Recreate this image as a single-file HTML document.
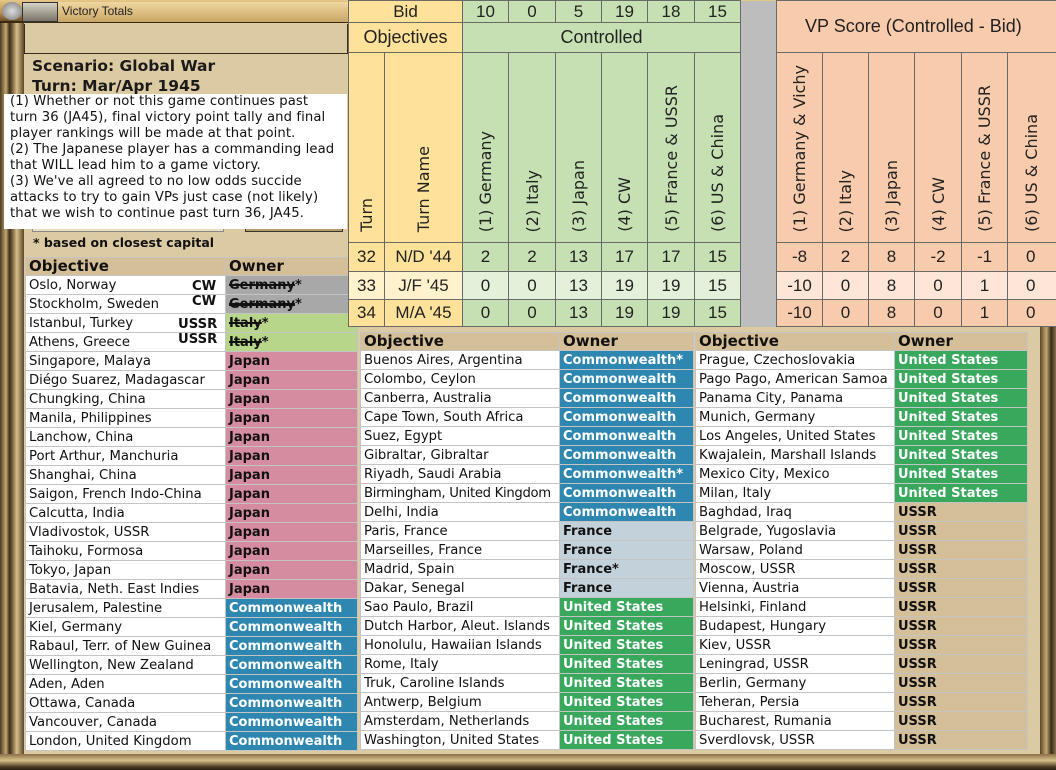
<!DOCTYPE html>
<html><head><meta charset="utf-8"><style>
*{margin:0;padding:0;box-sizing:border-box}
body{width:1056px;height:770px;overflow:hidden;position:relative;background:#dccaa2;font-family:"DejaVu Sans","Liberation Sans",sans-serif}
.abs{position:absolute}
.tb{position:absolute;border-collapse:collapse;table-layout:fixed;font-size:13.2px;background:#fff}
.tb td{height:19px;border:1px solid #c4c4c4;padding:0 0 0 3px;white-space:nowrap;overflow:hidden;line-height:17px;color:#111}
.tb tr.h td{background:#d5bf98;font-weight:bold;font-size:15px;height:18px;color:#111}
.o{font-weight:bold;font-size:13px!important}
.cw{background:#2e87b0;color:#fff!important}
.jp{background:#d68ca0}
.us{background:#37a85c;color:#fff!important}
.fr{background:#c3d2da}
.su{background:#d5bf98}
.gy{background:#a8a8a8}
.it{background:#b8d68a}
.ov{position:absolute;left:348px;top:0;border-collapse:collapse;table-layout:fixed;font-family:"Liberation Sans Narrow","Liberation Sans",sans-serif;font-size:17px;color:#222}
.ov td{border:1px solid #6a6a6a;text-align:center;padding:0;overflow:hidden;white-space:nowrap}
.y{background:#ffe29a}.g{background:#c6e0b4}.r{background:#f8cbad}.gg{background:#bdbdbd;border:none!important}
.g2{background:#e3f0da}.r2{background:#fde5d7}.y2{background:#fff2cc}
.v{writing-mode:vertical-rl;transform:rotate(180deg);font-family:"DejaVu Sans",sans-serif;font-size:16px;white-space:nowrap;display:inline-block;text-align:left;padding-top:5px}
.vc{vertical-align:bottom}
</style></head><body>
<div class="abs" style="left:0;top:0;width:1056px;height:23px;background:linear-gradient(#e6c88a,#b8904c 60%,#6e5028);border-bottom:2px solid #3a2a14"></div>
<div class="abs" style="left:2px;top:2px;width:20px;height:18px;border-radius:50%;background:radial-gradient(#ddd,#777);"></div>
<div class="abs" style="left:22px;top:2px;width:36px;height:20px;background:linear-gradient(#d6d2c6,#7a7468);border:1px solid #333"></div>
<div class="abs" style="left:58px;top:2px;width:290px;height:20px;background:linear-gradient(#f0d7a0,#c9a566);"></div>
<div class="abs" style="left:62px;top:4px;font-size:12px;color:#222;font-family:'Liberation Sans',sans-serif">Victory Totals</div>
<div class="abs" style="left:0;top:23px;width:24px;height:747px;background:linear-gradient(90deg,#4a3a22,#c4a86e 25%,#3a2c18 40%,#8a7048 55%,#d7c08a 70%,#5a4628)"></div>
<div class="abs" style="left:1040px;top:23px;width:16px;height:747px;background:linear-gradient(90deg,#5a4628,#c4a86e 40%,#3a2c18 70%,#8a7048)"></div>
<div class="abs" style="left:0;top:754px;width:1056px;height:16px;background:linear-gradient(#8a7048,#d7c08a 40%,#4a3a22 80%,#2a2010)"></div>
<div class="abs" style="left:24px;top:24px;width:324px;height:30px;border:1px solid #3a2c18;border-top:none"></div>
<div class="abs" style="left:32px;top:56px;font-weight:bold;font-size:15.5px;color:#1a1a1a;line-height:20px">Scenario: Global War<br>Turn: Mar/Apr 1945</div>
<div class="abs" style="left:245px;top:222px;width:98px;height:10px;background:#b89c6a;border:1px solid #333"></div>
<div class="abs" style="left:32px;top:222px;width:192px;height:10px;border:1px solid #888;background:#e8dcc0"></div>
<div class="abs" style="left:4px;top:94px;width:343px;height:135px;background:#fff;padding:0 0 0 6px;font-size:13.2px;line-height:16px;color:#111;white-space:nowrap;overflow:hidden;letter-spacing:0.1px">(1) Whether or not this game continues past<br>turn 36 (JA45), final victory point tally and final<br>player rankings will be made at that point.<br>(2) The Japanese player has a commanding lead<br>that WILL lead him to a game victory.<br>(3) We've all agreed to no low odds succide<br>attacks to try to gain VPs just case (not likely)<br>that we wish to continue past turn 36, JA45.</div>
<div class="abs" style="left:33px;top:235px;font-weight:bold;font-size:12.5px;color:#111">* based on closest capital</div>

<table class="tb" style="left:25px;top:257px;width:332px">
<colgroup><col style="width:200px"><col style="width:132px"></colgroup>
<tr class="h"><td>Objective</td><td>Owner</td></tr>
<tr><td style="position:relative">Oslo, Norway<span style="position:absolute;left:166px;top:2px;font-weight:bold">CW</span></td><td class="o gy"><s style="text-decoration-thickness:2px">Germany</s>*</td></tr>
<tr><td style="position:relative">Stockholm, Sweden<span style="position:absolute;left:166px;top:-2px;font-weight:bold">CW</span></td><td class="o gy"><s style="text-decoration-thickness:3px">Germany</s>*</td></tr>
<tr><td style="position:relative">Istanbul, Turkey<span style="position:absolute;left:152px;top:2px;font-weight:bold">USSR</span></td><td class="o it"><s style="text-decoration-thickness:2px">Italy</s>*</td></tr>
<tr><td style="position:relative">Athens, Greece<span style="position:absolute;left:152px;top:-2px;font-weight:bold">USSR</span></td><td class="o it"><s style="text-decoration-thickness:2px">Italy</s>*</td></tr>
<tr><td>Singapore, Malaya</td><td class="o jp">Japan</td></tr>
<tr><td>Diégo Suarez, Madagascar</td><td class="o jp">Japan</td></tr>
<tr><td>Chungking, China</td><td class="o jp">Japan</td></tr>
<tr><td>Manila, Philippines</td><td class="o jp">Japan</td></tr>
<tr><td>Lanchow, China</td><td class="o jp">Japan</td></tr>
<tr><td>Port Arthur, Manchuria</td><td class="o jp">Japan</td></tr>
<tr><td>Shanghai, China</td><td class="o jp">Japan</td></tr>
<tr><td>Saigon, French Indo-China</td><td class="o jp">Japan</td></tr>
<tr><td>Calcutta, India</td><td class="o jp">Japan</td></tr>
<tr><td>Vladivostok, USSR</td><td class="o jp">Japan</td></tr>
<tr><td>Taihoku, Formosa</td><td class="o jp">Japan</td></tr>
<tr><td>Tokyo, Japan</td><td class="o jp">Japan</td></tr>
<tr><td>Batavia, Neth. East Indies</td><td class="o jp">Japan</td></tr>
<tr><td>Jerusalem, Palestine</td><td class="o cw">Commonwealth</td></tr>
<tr><td>Kiel, Germany</td><td class="o cw">Commonwealth</td></tr>
<tr><td>Rabaul, Terr. of New Guinea</td><td class="o cw">Commonwealth</td></tr>
<tr><td>Wellington, New Zealand</td><td class="o cw">Commonwealth</td></tr>
<tr><td>Aden, Aden</td><td class="o cw">Commonwealth</td></tr>
<tr><td>Ottawa, Canada</td><td class="o cw">Commonwealth</td></tr>
<tr><td>Vancouver, Canada</td><td class="o cw">Commonwealth</td></tr>
<tr><td>London, United Kingdom</td><td class="o cw">Commonwealth</td></tr>
</table>

<table class="tb" style="left:360px;top:332px;width:333px">
<colgroup><col style="width:199px"><col style="width:134px"></colgroup>
<tr class="h"><td>Objective</td><td>Owner</td></tr>
<tr><td>Buenos Aires, Argentina</td><td class="o cw">Commonwealth*</td></tr>
<tr><td>Colombo, Ceylon</td><td class="o cw">Commonwealth</td></tr>
<tr><td>Canberra, Australia</td><td class="o cw">Commonwealth</td></tr>
<tr><td>Cape Town, South Africa</td><td class="o cw">Commonwealth</td></tr>
<tr><td>Suez, Egypt</td><td class="o cw">Commonwealth</td></tr>
<tr><td>Gibraltar, Gibraltar</td><td class="o cw">Commonwealth</td></tr>
<tr><td>Riyadh, Saudi Arabia</td><td class="o cw">Commonwealth*</td></tr>
<tr><td style="letter-spacing:-0.3px">Birmingham, United Kingdom</td><td class="o cw">Commonwealth</td></tr>
<tr><td>Delhi, India</td><td class="o cw">Commonwealth</td></tr>
<tr><td>Paris, France</td><td class="o fr">France</td></tr>
<tr><td>Marseilles, France</td><td class="o fr">France</td></tr>
<tr><td>Madrid, Spain</td><td class="o fr">France*</td></tr>
<tr><td>Dakar, Senegal</td><td class="o fr">France</td></tr>
<tr><td>Sao Paulo, Brazil</td><td class="o us">United States</td></tr>
<tr><td>Dutch Harbor, Aleut. Islands</td><td class="o us">United States</td></tr>
<tr><td>Honolulu, Hawaiian Islands</td><td class="o us">United States</td></tr>
<tr><td>Rome, Italy</td><td class="o us">United States</td></tr>
<tr><td>Truk, Caroline Islands</td><td class="o us">United States</td></tr>
<tr><td>Antwerp, Belgium</td><td class="o us">United States</td></tr>
<tr><td>Amsterdam, Netherlands</td><td class="o us">United States</td></tr>
<tr><td>Washington, United States</td><td class="o us">United States</td></tr>
</table>

<table class="tb" style="left:695px;top:332px;width:332px">
<colgroup><col style="width:199px"><col style="width:133px"></colgroup>
<tr class="h"><td>Objective</td><td>Owner</td></tr>
<tr><td>Prague, Czechoslovakia</td><td class="o us">United States</td></tr>
<tr><td>Pago Pago, American Samoa</td><td class="o us">United States</td></tr>
<tr><td>Panama City, Panama</td><td class="o us">United States</td></tr>
<tr><td>Munich, Germany</td><td class="o us">United States</td></tr>
<tr><td>Los Angeles, United States</td><td class="o us">United States</td></tr>
<tr><td>Kwajalein, Marshall Islands</td><td class="o us">United States</td></tr>
<tr><td>Mexico City, Mexico</td><td class="o us">United States</td></tr>
<tr><td>Milan, Italy</td><td class="o us">United States</td></tr>
<tr><td>Baghdad, Iraq</td><td class="o su">USSR</td></tr>
<tr><td>Belgrade, Yugoslavia</td><td class="o su">USSR</td></tr>
<tr><td>Warsaw, Poland</td><td class="o su">USSR</td></tr>
<tr><td>Moscow, USSR</td><td class="o su">USSR</td></tr>
<tr><td>Vienna, Austria</td><td class="o su">USSR</td></tr>
<tr><td>Helsinki, Finland</td><td class="o su">USSR</td></tr>
<tr><td>Budapest, Hungary</td><td class="o su">USSR</td></tr>
<tr><td>Kiev, USSR</td><td class="o su">USSR</td></tr>
<tr><td>Leningrad, USSR</td><td class="o su">USSR</td></tr>
<tr><td>Berlin, Germany</td><td class="o su">USSR</td></tr>
<tr><td>Teheran, Persia</td><td class="o su">USSR</td></tr>
<tr><td>Bucharest, Rumania</td><td class="o su">USSR</td></tr>
<tr><td>Sverdlovsk, USSR</td><td class="o su">USSR</td></tr>
</table>

<table class="ov" style="width:716px">
<colgroup><col style="width:36px"><col style="width:78px"><col style="width:46px"><col style="width:47px"><col style="width:46px"><col style="width:46px"><col style="width:47px"><col style="width:46px"><col style="width:36px"><col style="width:46px"><col style="width:46px"><col style="width:46px"><col style="width:47px"><col style="width:46px"><col style="width:56px"></colgroup>
<tr style="height:22px"><td class="y" colspan="2">Bid</td><td class="g">10</td><td class="g">0</td><td class="g">5</td><td class="g">19</td><td class="g">18</td><td class="g">15</td><td class="gg" rowspan="6"></td><td class="r" colspan="6" rowspan="2" style="font-size:18px;text-align:left;padding-left:28px">VP Score (Controlled - Bid)</td></tr>
<tr style="height:30px"><td class="y" colspan="2" style="font-size:18px">Objectives</td><td class="g" colspan="6" style="font-size:18px">Controlled</td></tr>
<tr style="height:190px">
<td class="y vc"><span class="v">Turn</span></td><td class="y vc"><span class="v">Turn Name</span></td>
<td class="g vc"><span class="v">(1) Germany</span></td><td class="g vc"><span class="v">(2) Italy</span></td><td class="g vc"><span class="v">(3) Japan</span></td><td class="g vc"><span class="v">(4) CW</span></td><td class="g vc"><span class="v">(5) France &amp; USSR</span></td><td class="g vc"><span class="v">(6) US &amp; China</span></td>
<td class="r vc"><span class="v">(1) Germany &amp; Vichy</span></td><td class="r vc"><span class="v">(2) Italy</span></td><td class="r vc"><span class="v">(3) Japan</span></td><td class="r vc"><span class="v">(4) CW</span></td><td class="r vc"><span class="v">(5) France &amp; USSR</span></td><td class="r vc" style="text-align:left;padding-left:14px"><span class="v">(6) US &amp; China</span></td></tr>
<tr style="height:29px"><td class="y">32</td><td class="y">N/D '44</td><td class="g">2</td><td class="g">2</td><td class="g">13</td><td class="g">17</td><td class="g">17</td><td class="g">15</td><td class="r">-8</td><td class="r">2</td><td class="r">8</td><td class="r">-2</td><td class="r">-1</td><td class="r" style="text-align:left;padding-left:18px">0</td></tr>
<tr style="height:28px"><td class="y2">33</td><td class="y2">J/F '45</td><td class="g2">0</td><td class="g2">0</td><td class="g2">13</td><td class="g2">19</td><td class="g2">19</td><td class="g2">15</td><td class="r2">-10</td><td class="r2">0</td><td class="r2">8</td><td class="r2">0</td><td class="r2">1</td><td class="r2" style="text-align:left;padding-left:18px">0</td></tr>
<tr style="height:27px"><td class="y">34</td><td class="y">M/A '45</td><td class="g">0</td><td class="g">0</td><td class="g">13</td><td class="g">19</td><td class="g">19</td><td class="g">15</td><td class="r">-10</td><td class="r">0</td><td class="r">8</td><td class="r">0</td><td class="r">1</td><td class="r" style="text-align:left;padding-left:18px">0</td></tr>
</table>
</body></html>
